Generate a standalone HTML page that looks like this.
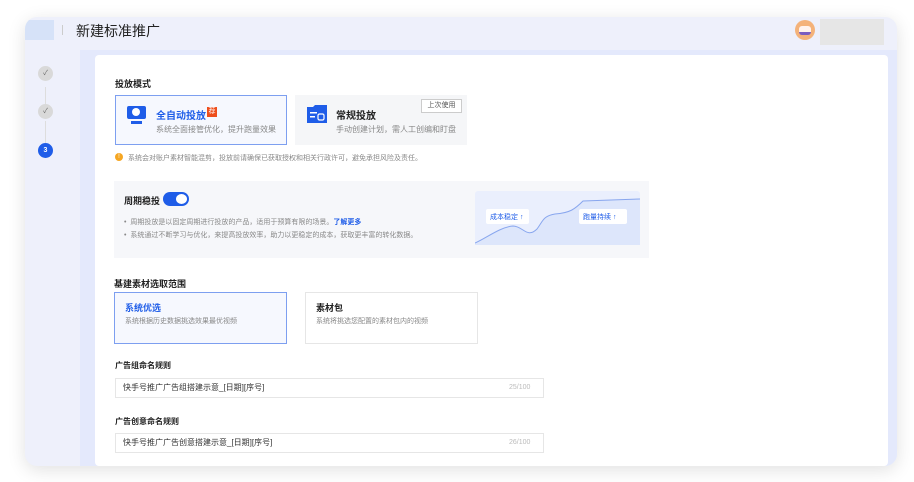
<!DOCTYPE html>
<html><head><meta charset="utf-8"><style>
*{margin:0;padding:0;box-sizing:border-box}
body{width:914px;height:482px;background:#fff;font-family:"Liberation Sans","Noto Sans CJK SC",sans-serif;position:relative;overflow:hidden;color:#222}
.win{position:absolute;left:25px;top:17px;width:872px;height:449px;border-radius:12px;background:#eef0fb;box-shadow:0 4px 18px rgba(0,0,0,.12);overflow:hidden}
.abs{position:absolute}
.t{font-size:8px;color:#888;white-space:nowrap}
.h{font-size:9px;font-weight:bold;color:#222;white-space:nowrap}
</style></head><body>
<div class="win">
  <div class="abs" style="left:0;top:3px;width:29px;height:20px;background:#d6e2f8"></div>
  <div class="abs" style="left:37px;top:8px;width:1px;height:10px;background:#ccc"></div>
  <div class="abs" style="left:51px;top:4px;font-size:14px;color:#222">新建标准推广</div>
  <div class="abs" style="left:770px;top:3px;width:20px;height:20px;border-radius:50%;background:#f4b27a"></div>
  <div class="abs" style="left:774px;top:9px;width:12px;height:9px;border-radius:3px;background:#fff3ee;border-bottom:3px solid #7a5cc0"></div>
  <div class="abs" style="left:795px;top:2px;width:64px;height:26px;background:#e6e6e6"></div>
  <div class="abs" style="left:20px;top:70px;width:1px;height:20px;background:#ddd"></div>
  <div class="abs" style="left:20px;top:104px;width:1px;height:22px;background:#ddd"></div>
  <div class="abs" style="left:13px;top:49px;width:15px;height:15px;border-radius:50%;background:#d9d9d9;color:#666;font-size:7px;text-align:center;line-height:15px">✓</div>
  <div class="abs" style="left:13px;top:87px;width:15px;height:15px;border-radius:50%;background:#d9d9d9;color:#666;font-size:7px;text-align:center;line-height:15px">✓</div>
  <div class="abs" style="left:13px;top:126px;width:15px;height:15px;border-radius:50%;background:#1f5de8;color:#fff;font-size:7px;font-weight:bold;text-align:center;line-height:15px">3</div>
  <div class="abs" style="left:55px;top:33px;width:817px;height:416px;background:#e4e9fc"></div>
  <div class="abs" style="left:70px;top:38px;width:793px;height:411px;background:#fff;border-radius:4px"></div>
</div>
<div class="abs h" style="left:115px;top:77px">投放模式</div>
<div class="abs" style="left:115px;top:95px;width:172px;height:50px;border:1px solid #7d9ff0;background:#f6f8fe"></div>
<div class="abs" style="left:127px;top:106px;width:19px;height:13px;background:#1f5de8;border-radius:2px"></div>
<div class="abs" style="left:132px;top:108px;width:8px;height:8px;border-radius:50%;background:#fff"></div>
<div class="abs" style="left:131px;top:121px;width:11px;height:3px;background:#1f5de8"></div>
<div class="abs" style="left:156px;top:107px;font-size:10px;font-weight:bold;color:#1f5de8">全自动投放</div>
<div class="abs" style="left:207px;top:107px;width:10px;height:10px;background:#ee4e1c;color:#fff;font-size:7px;text-align:center;line-height:10px">荐</div>
<div class="abs t" style="left:156px;top:124px">系统全面接管优化，提升跑量效果</div>
<div class="abs" style="left:295px;top:95px;width:172px;height:50px;background:#f5f6f8"></div>
<svg class="abs" style="left:306px;top:104px" width="22" height="20"><path d="M1 3 L7 3 L9 1 L21 1 L21 19 L1 19Z" fill="#1f5de8"/><rect x="4" y="8" width="7" height="1.5" fill="#fff"/><rect x="4" y="12" width="5" height="1.5" fill="#fff"/><rect x="12" y="10" width="6" height="6" rx="1.5" fill="none" stroke="#fff" stroke-width="1.2"/></svg>
<div class="abs" style="left:336px;top:107px;font-size:10px;font-weight:bold;color:#222">常规投放</div>
<div class="abs" style="left:421px;top:99px;width:41px;height:14px;border:1px solid #ccc;background:#fff;font-size:7px;color:#555;text-align:center;line-height:12px">上次使用</div>
<div class="abs t" style="left:336px;top:124px">手动创建计划，需人工创编和盯盘</div>
<div class="abs" style="left:115px;top:153px;width:8px;height:8px;border-radius:50%;background:#f5a623;color:#fff;font-size:6px;text-align:center;line-height:8px">!</div>
<div class="abs t" style="left:128px;top:153px;font-size:7px">系统会对账户素材智能混剪，投放前请确保已获取授权和相关行政许可，避免承担风险及责任。</div>
<div class="abs" style="left:114px;top:181px;width:535px;height:77px;background:#f6f7fa"></div>
<div class="abs h" style="left:124px;top:194px">周期稳投</div>
<div class="abs" style="left:163px;top:192px;width:26px;height:14px;border-radius:7px;background:#1f5de8"></div>
<div class="abs" style="left:176px;top:194px;width:11px;height:10px;border-radius:50%;background:#fff"></div>
<div class="abs t" style="left:124px;top:217px;font-size:7px">•&nbsp; 周期投放是以固定周期进行投放的产品，适用于预算有限的场景。<span style="color:#1f5de8;font-weight:bold">了解更多</span></div>
<div class="abs t" style="left:124px;top:230px;font-size:7px">•&nbsp; 系统通过不断学习与优化，来提高投放效率，助力以更稳定的成本，获取更丰富的转化数据。</div>
<svg class="abs" style="left:475px;top:191px" width="165" height="54"><rect width="165" height="54" rx="3" fill="#eaeffd"/><path d="M0 52 C10 48 25 36 38 35 C48 35 52 48 62 38 C68 30 68 25 80 23 C95 22 100 18 108 10 L165 8 L165 54 L0 54Z" fill="#dde6fb"/><path d="M0 52 C10 48 25 36 38 35 C48 35 52 48 62 38 C68 30 68 25 80 23 C95 22 100 18 108 10 L165 8" fill="none" stroke="#88a6ee" stroke-width="1"/><rect x="11" y="18" width="43" height="15" rx="2" fill="#fff"/><text x="15" y="28" font-size="7" fill="#1f5de8" font-family="Liberation Sans,Noto Sans CJK SC,sans-serif">成本稳定 ↑</text><rect x="104" y="18" width="48" height="15" rx="2" fill="#fff"/><text x="108" y="28" font-size="7" fill="#1f5de8" font-family="Liberation Sans,Noto Sans CJK SC,sans-serif">跑量持续 ↑</text></svg>
<div class="abs h" style="left:114px;top:277px">基建素材选取范围</div>
<div class="abs" style="left:114px;top:292px;width:173px;height:52px;border:1px solid #7d9ff0;background:#f6f8fe"></div>
<div class="abs" style="left:125px;top:301px;font-size:9px;font-weight:bold;color:#1f5de8">系统优选</div>
<div class="abs t" style="left:125px;top:316px;font-size:7px">系统根据历史数据挑选效果最优视频</div>
<div class="abs" style="left:305px;top:292px;width:173px;height:52px;border:1px solid #e6e6e6;background:#fff"></div>
<div class="abs" style="left:316px;top:301px;font-size:9px;font-weight:bold;color:#222">素材包</div>
<div class="abs t" style="left:316px;top:316px;font-size:7px">系统将挑选您配置的素材包内的视频</div>
<div class="abs h" style="left:115px;top:360px;font-size:8px">广告组命名规则</div>
<div class="abs" style="left:115px;top:378px;width:429px;height:20px;border:1px solid #e6e6e6"></div>
<div class="abs" style="left:123px;top:382px;font-size:8px;color:#333">快手号推广广告组搭建示意_[日期][序号]</div>
<div class="abs" style="left:509px;top:384px;font-size:7px;color:#bbb">25/100</div>
<div class="abs h" style="left:115px;top:416px;font-size:8px">广告创意命名规则</div>
<div class="abs" style="left:115px;top:433px;width:429px;height:20px;border:1px solid #e6e6e6"></div>
<div class="abs" style="left:123px;top:437px;font-size:8px;color:#333">快手号推广广告创意搭建示意_[日期][序号]</div>
<div class="abs" style="left:509px;top:439px;font-size:7px;color:#bbb">26/100</div>
</body></html>
